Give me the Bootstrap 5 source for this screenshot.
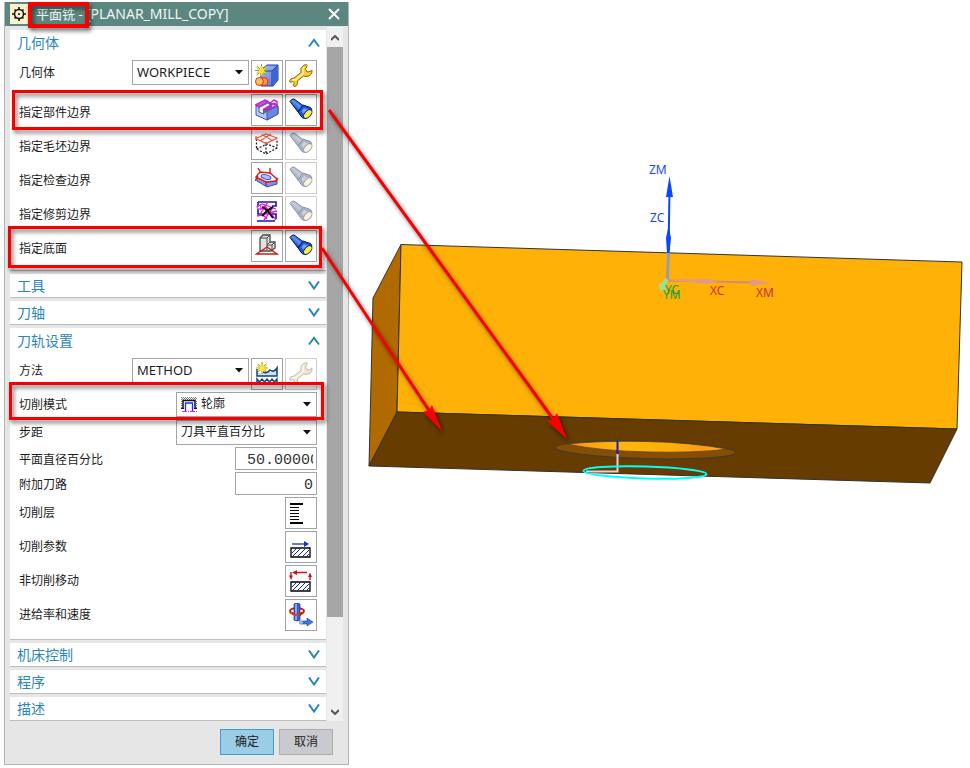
<!DOCTYPE html>
<html lang="zh-CN">
<head>
<meta charset="utf-8">
<meta name="viewport" content="width=device-width, initial-scale=1">
<title>平面铣 - [PLANAR_MILL_COPY]</title>
<link href="https://cdn.jsdelivr.net/npm/bootstrap@5.3.0/dist/css/bootstrap.min.css" rel="stylesheet">
<style>
  body { font-family: "Noto Sans", "Noto Sans CJK SC", sans-serif; font-size: 12px; color: #1c1c1c; background: #fff; }
  .dialog { flex: 0 0 345px; margin: 2px 0 0 4px; background: #e6e6e6; border: 1px solid #b4b4b4; border-top: 0; }
  .titlebar { height: 24px; background: #5b8780; color: #eef6f4; font-size: 13px; line-height: 24px; padding: 0 8px 0 5px; }
  .titlebar svg { display: block; }
  .title-text { padding-left: 8px; font-weight: 400; font-size: 13px; line-height: 24px; }
  .title-op { font-size: 14px; }
  .panes { padding: 4px 0 0 5px; }
  .pane-list { row-gap: 3px; }
  .pane { background: #fff; border-bottom: 1px solid #bdbdbd; }
  .pane-head { height: 26px; line-height: 26px; font-size: 14px; color: #2a86b8; padding: 0 6px 0 7px; background: none; border: 0; }
  .pane-shut .pane-head { height: 23px; }
  .pane-body { padding: 4px 9px 6px 9px; }
  .line { height: 34px; column-gap: 2px; }
  .line > label, .line > .cap { line-height: 25px; }
  .line-btn > .cap { line-height: 32px; }
  .geom .line-btn > .cap { padding-top: 3px; }
  .line-mode { height: 28px; }
  .line-step { height: 27px; }
  .line-num { height: 25px; }
  .pick { height: 25px; border: 1px solid #a6a6a6; background: #fff; }
  .pick .form-select { font-size: 12px; line-height: 20px; height: 23px; min-height: 0; padding: 0 18px 1px 4px; border: 0; border-radius: 0; color: #1c1c1c;
    background-image: url("data:image/svg+xml,%3csvg xmlns='http://www.w3.org/2000/svg' viewBox='0 0 8 5'%3e%3cpath d='M0 0h8L4 4.5z' fill='%23111'/%3e%3c/svg%3e");
    background-size: 8px 5px; background-position: right 5px center; }
  .pick-sm { width: 117px; }
  .pick-sm .form-select { font-size: 13px; }
  .pick-lg { width: 141px; }
  .numbox { width: 82px; height: 23px; border: 1px solid #a6a6a6; border-radius: 0; padding: 3px 3px 0 11px; font: 15px "Liberation Mono", monospace; color: #333; }
  .tool { width: 32px; height: 32px; border: 1px solid #a3a3a3; background: #fff; padding: 0; display: flex; align-items: center; justify-content: center; }
  .tool:disabled { border-color: #cfcfcf; }
  .tool:disabled svg { opacity: .45; filter: grayscale(.65); }
  .scroller { width: 16px; background: #f0f0f0; margin: -3px 5px 0 1px; }
  .scroller button { height: 20px; border: 0; background: none; padding: 0; line-height: 1; }
  .thumb { flex: 570 0 0; background: #a6a6a6; }
  .groove { flex: 84 0 0; }
  .actions { padding: 8px 15px 9px 0; gap: 5px; }
  .act { width: 54px; height: 26px; font-size: 12px; line-height: 18px; padding: 2px; border-radius: 0; border: 1px solid #adadad; background: #c9cacf; color: #1c1c1c; }
  .act-ok { background: #9bcde6; border-color: #3c9fd0; }
  .scene { flex: 1 1 0; min-width: 0; height: 766px; font-size: 12px; }
  .notes { left: 0; top: 0; pointer-events: none; filter: drop-shadow(2px 3px 2px rgba(0,0,0,.55)); }
</style>
</head>
<body>
<svg width="0" height="0" class="position-absolute" aria-hidden="true">
  <defs>
    <linearGradient id="tb" gradientUnits="userSpaceOnUse" x1="5" y1="12" x2="12" y2="4"><stop offset="0" stop-color="#0a2a9c"/><stop offset=".6" stop-color="#5d97f5"/><stop offset="1" stop-color="#0f3cc0"/></linearGradient>
    <linearGradient id="cube" x1="0" y1="0" x2="1" y2="1"><stop offset="0" stop-color="#a9c4fb"/><stop offset="1" stop-color="#4c72da"/></linearGradient>
    <linearGradient id="hole" x1="0" x2="1"><stop offset="0" stop-color="#ff8f0a"/><stop offset=".3" stop-color="#ffb610"/><stop offset=".65" stop-color="#ffae08"/><stop offset=".85" stop-color="#ff9a18"/><stop offset="1" stop-color="#ffb020"/></linearGradient>
    <symbol id="torch" viewBox="0 0 24 24">
      <path d="M1 3.500Q2 1 5 1L14 7.500 9 14z" fill="url(#tb)" stroke="#04145e"/>
      <path d="M14 7 21.500 9.500 23 12 15.500 20.500 13 19.500 9 14z" fill="#1d55d8" stroke="#04145e"/>
      <path d="M12.500 13 15 10 19 11.500 14.500 16z" fill="#6da4fa"/>
      <ellipse cx="18.800" cy="16" rx="3" ry="5.300" transform="rotate(42 18.800 16)" fill="#ffee3c" stroke="#0b2a80"/>
    </symbol>
    <symbol id="wrench" viewBox="0 0 24 24">
      <path d="M15 1Q19 0 18 2L16.500 5 18 8 21 7.500 23 6Q24 10 20 12 17 13 14.500 12L8.500 17Q9 20 7 22L5 22.500 4 21 5.500 19 4 17.500 1.500 18.500.500 17Q1 14 5 14L12 8.500Q10.500 4 15 1z" fill="#f8cb2f" stroke="#8c6a0a"/>
      <path d="M15 3Q12.500 6 14.500 9L7 15.500 3.500 16" fill="none" stroke="#fff3ae" stroke-width="1.500"/>
    </symbol>
    <symbol id="star" viewBox="0 0 14 14">
      <path d="M7 0V14M0 7H14M2 2 12 12M12 2 2 12" stroke="#7c9c20"/><path d="M7 1 8.500 5 12.500 4 9.500 7 12.500 10 8.500 9.500 7 13 5.500 9.500 1.500 10 4.500 7 1.500 4 5.500 5z" fill="#ffe93a" stroke="#d6a900" stroke-width=".5"/>
    </symbol>
    <symbol id="down" viewBox="0 0 12 10"><path d="M1 .500 6 7.500 11 .500" fill="none" stroke="#2a86b8" stroke-width="2"/></symbol>
    <symbol id="up" viewBox="0 0 12 10"><path d="M1 8.500 6 2 11 8.500" fill="none" stroke="#2a86b8" stroke-width="2"/></symbol>
  </defs>
</svg>

<main class="position-relative d-flex align-items-start overflow-hidden">
  <section class="dialog" aria-label="平面铣">
    <header class="titlebar d-flex align-items-center">
      <svg width="18" height="20" viewBox="0 0 18 20"><path d="M0 0H18V20H0z" fill="#fdf1c9"/><circle cx="9" cy="10" r="4.500" fill="none" stroke="#111" stroke-width="1.500"/><path d="M9 3V5.500M9 14.500V17M2 10H4.500M13.500 10H16M4.500 5.500 6 7M13.500 5.500 12 7M4.500 14.500 6 13M13.500 14.500 12 13" stroke="#111" stroke-width="1.600"/><circle cx="9" cy="10" r="1" fill="#111"/></svg>
      <h1 class="title-text m-0 flex-grow-1">平面铣 - <span class="title-op">[PLANAR_MILL_COPY]</span></h1>
      <button class="border-0 bg-transparent p-0" type="button" aria-label="关闭"><svg width="12" height="12"><path d="M1 1 11 11M11 1 1 11" stroke="#fff" stroke-width="2"/></svg></button>
    </header>

    <div class="panes d-flex">
      <div class="pane-list flex-grow-1 d-grid">
        <section class="pane geom">
          <button class="pane-head w-100 d-flex justify-content-between align-items-center" type="button">几何体<svg width="12" height="10"><use href="#up"/></svg></button>
          <div class="pane-body">
            <div class="line d-flex align-items-start">
              <label class="flex-grow-1" for="geo">几何体</label>
              <div class="pick pick-sm"><select class="form-select" id="geo"><option>WORKPIECE</option></select></div>
              <button class="tool" type="button" aria-label="新建几何体"><svg width="24" height="24"><path d="M6 6 12 1H23V16L18 22H6z" fill="url(#cube)" stroke="#1d3cae"/><path d="M6 7H17V22M17 7 23 1" fill="none" stroke="#1d3cae"/><path d="M17.500 7 22.500 2V16L17.500 21z" fill="#3f63d2"/><use href="#star" x="0" y="0" width="13" height="13"/><circle cx="9" cy="17.500" r="4" fill="#ff9a40" stroke="#e02a10"/><circle cx="4.500" cy="17.500" r="4" fill="#ffc05c" stroke="#e02a10"/></svg></button>
              <button class="tool" type="button" aria-label="编辑几何体"><svg width="24" height="24"><use href="#wrench"/></svg></button>
            </div>
            <div class="line line-btn d-flex align-items-start">
              <span class="cap flex-grow-1">指定部件边界</span>
              <button class="tool" type="button" aria-label="选择部件边界"><svg width="24" height="24"><path d="M1 8 11 3 23 8V16L12 22 1 17z" fill="#b4c8f8" stroke="#4054a8"/><path d="M12 13 23 8V16L12 22z" fill="#6888e0" stroke="#4054a8"/><path d="M4 9.500V14L8.500 16V11.500L17 7.500 13 5z" fill="#f4f7ff" stroke="#4054a8"/><path d="M8.500 11.500 17 7.500V11L8.500 16z" fill="#56699f"/><path d="M0 7 10 2 13 3.500 4 8.500V10M4 8.500 1 7M9 11 19 5 22 7 13 12zM15 8V5L19 2 22 3.500V7" fill="none" stroke="#d313cf" stroke-width="1.400"/></svg></button>
              <button class="tool" type="button" aria-label="显示部件边界"><svg width="24" height="24"><use href="#torch"/></svg></button>
            </div>
            <div class="line line-btn d-flex align-items-start">
              <span class="cap flex-grow-1">指定毛坯边界</span>
              <button class="tool" type="button" aria-label="选择毛坯边界"><svg width="24" height="24" fill="none"><path d="M1.500 7V17L11 22 22 16V7M11 12V22M1.500 17 12 12 22 16" stroke="#222" stroke-width="1.300" stroke-dasharray="2 1.500"/><path d="M1 6.500 11 2 22 6 11 11.500zM7 2.500 18 9M16 2 5 9M1 4V8M11 10V13" stroke="#ef5b42" stroke-width="1.300"/></svg></button>
              <button class="tool" type="button" disabled aria-label="显示毛坯边界"><svg width="24" height="24"><use href="#torch"/></svg></button>
            </div>
            <div class="line line-btn d-flex align-items-start">
              <span class="cap flex-grow-1">指定检查边界</span>
              <button class="tool" type="button" aria-label="选择检查边界"><svg width="24" height="24"><path d="M1 11 12 16 22 14V18L12 21 2 15z" fill="#7b98e6" stroke="#3a51b5"/><path d="M1 11 5 6 15 7 22 13 21 15 11 16z" fill="#f6f9ff" stroke="#e01b1b" stroke-width="1.400"/><ellipse cx="11" cy="11" rx="5" ry="2.200" transform="rotate(15 11 11)" fill="#aabfff" stroke="#3145c9"/><path d="M3 2 6 7M15 2V8M0 15 3 10M11 15V20M20 16 23 12" stroke="#e01b1b" stroke-width="1.400"/></svg></button>
              <button class="tool" type="button" disabled aria-label="显示检查边界"><svg width="24" height="24"><use href="#torch"/></svg></button>
            </div>
            <div class="line line-btn d-flex align-items-start">
              <span class="cap flex-grow-1">指定修剪边界</span>
              <button class="tool" type="button" aria-label="选择修剪边界"><svg width="24" height="24" fill="none"><path d="M3 2H21V6H17M3 2V6M3 9V14H7M17 14H21V19M2 21H20" stroke="#1414c0" stroke-width="1.600"/><path d="M2 7 7 4 21 9M5 10 10 6 21 20M13 2 6 13 12 19M17 9 9 20M2 16 22 11" stroke="#e01bd8" stroke-width="1.300"/><circle cx="4" cy="7" r="2" stroke="#e01bd8"/><path d="M7 7Q12 9 18 18M18 7Q12 10 7 16" stroke="#111" stroke-width="2"/></svg></button>
              <button class="tool" type="button" disabled aria-label="显示修剪边界"><svg width="24" height="24"><use href="#torch"/></svg></button>
            </div>
            <div class="line line-btn d-flex align-items-start">
              <span class="cap flex-grow-1">指定底面</span>
              <button class="tool" type="button" aria-label="选择底面"><svg width="24" height="24"><path d="M5 4 8 1H15V8L20 8V14L16 17H5z" fill="#e2e2e2" stroke="#4b4b4b" stroke-width="1.300"/><path d="M5 4H12V16M12 4 15 1M12 11H17V17M17 11 20 8M12 11 15 8" fill="none" stroke="#4b4b4b"/><path d="M1.500 20H22L12 13z" fill="none" stroke="#d01818" stroke-width="1.300"/></svg></button>
              <button class="tool" type="button" aria-label="显示底面"><svg width="24" height="24"><use href="#torch"/></svg></button>
            </div>
          </div>
        </section>

        <section class="pane pane-shut"><button class="pane-head w-100 d-flex justify-content-between align-items-center" type="button">工具<svg width="12" height="10"><use href="#down"/></svg></button></section>
        <section class="pane pane-shut"><button class="pane-head w-100 d-flex justify-content-between align-items-center" type="button">刀轴<svg width="12" height="10"><use href="#down"/></svg></button></section>

        <section class="pane">
          <button class="pane-head w-100 d-flex justify-content-between align-items-center" type="button">刀轨设置<svg width="12" height="10"><use href="#up"/></svg></button>
          <div class="pane-body">
            <div class="line d-flex align-items-start">
              <label class="flex-grow-1" for="method">方法</label>
              <div class="pick pick-sm"><select class="form-select" id="method"><option>METHOD</option></select></div>
              <button class="tool" type="button" aria-label="新建方法"><svg width="24" height="24"><path d="M2 8Q4 12 8 11T14 10 20 9L22 7V14H2z" fill="#c3e4f7"/><path d="M2 7V14H22V6Q19 11 15 8 12 12 8 10" fill="none" stroke="#173f78" stroke-width="1.500"/><path d="M2 22V17L4.500 20 7 17 9.500 20 12 17 14.500 20 17 17 19.500 20 22 17V22" fill="none" stroke="#173f78" stroke-width="1.400"/><use href="#star" x="1" y="0" width="12" height="12"/></svg></button>
              <button class="tool" type="button" disabled aria-label="编辑方法"><svg width="24" height="24"><use href="#wrench"/></svg></button>
            </div>
            <div class="line line-mode d-flex align-items-start">
              <label class="flex-grow-1" for="mode">切削模式</label>
              <div class="pick pick-lg d-flex align-items-center"><svg class="ms-1 flex-shrink-0" width="16" height="16"><path d="M0 .500H16M0 2.500H16M.500 4V11M15.500 4V11" stroke="#777" stroke-dasharray="1 1"/><path d="M1 1.500H16" stroke="#777" stroke-dasharray="1 1"/><path d="M2 11.500V3.500H14V11.500" fill="none" stroke="#111" stroke-width="1.500"/><path d="M0 11.500H3M13 11.500H16" stroke="#111"/><path d="M4.500 14V6H11.500V14" fill="none" stroke="#1530ff" stroke-width="1.300"/><path d="M1 14.500H16" stroke="#f01be8" stroke-dasharray="5 1 1 1"/></svg><select class="form-select" id="mode"><option>轮廓</option></select></div>
            </div>
            <div class="line line-step d-flex align-items-start">
              <label class="flex-grow-1" for="step">步距</label>
              <div class="pick pick-lg"><select class="form-select" id="step"><option>刀具平直百分比</option></select></div>
            </div>
            <div class="line line-num d-flex align-items-start">
              <label class="flex-grow-1" for="pct">平面直径百分比</label>
              <input class="numbox" id="pct" type="text" value="50.00000">
            </div>
            <div class="line line-num d-flex align-items-start">
              <label class="flex-grow-1" for="extra">附加刀路</label>
              <input class="numbox text-end" id="extra" type="text" value="0">
            </div>
            <div class="line line-btn d-flex align-items-start">
              <span class="cap flex-grow-1">切削层</span>
              <button class="tool" type="button" aria-label="切削层"><svg width="24" height="24"><path d="M1 3H14M1 22H14" stroke="#000" stroke-width="2"/><path d="M1 6.500H10M1 9.500H10M1 12.500H10M1 15.500H10M1 18.500H10" stroke="#000"/></svg></button>
            </div>
            <div class="line line-btn d-flex align-items-start">
              <span class="cap flex-grow-1">切削参数</span>
              <button class="tool" type="button" aria-label="切削参数"><svg width="24" height="24"><path d="M3 9H15" stroke="#1730c8" stroke-width="1.300"/><path d="M15 6 20 9 15 12z" fill="#1730c8"/><path d="M2 13H21V22H2z" fill="#fff" stroke="#000" stroke-width="1.300"/><path d="M3 18 7 14M4 21 11 14M9 21 16 14M14 21 20 15M18 21 20 19" stroke="#1a2a9a"/></svg></button>
            </div>
            <div class="line line-btn d-flex align-items-start">
              <span class="cap flex-grow-1">非切削移动</span>
              <button class="tool" type="button" aria-label="非切削移动"><svg width="24" height="24"><path d="M18 3.500H7M2 3V8M21 11V6" stroke="#c81616" stroke-width="1.400"/><path d="M8 1V6L3 3.500zM0 6.500H4L2 11zM19 8H23L21 3.500z" fill="#c81616"/><path d="M2 13H21V22H2z" fill="#fff" stroke="#000" stroke-width="1.300"/><path d="M3 18 7 14M4 21 11 14M9 21 16 14M14 21 20 15M18 21 20 19" stroke="#1a2a9a"/></svg></button>
            </div>
            <div class="line line-btn d-flex align-items-start">
              <span class="cap flex-grow-1">进给率和速度</span>
              <button class="tool" type="button" aria-label="进给率和速度"><svg width="24" height="24"><ellipse cx="8" cy="8" rx="7" ry="3" fill="none" stroke="#c4260e" stroke-width="2"/><path d="M5 1Q8-1 11 1V17Q8 19 5 17z" fill="#3a62cf" stroke="#1b358e" stroke-width=".7"/><path d="M7 1V17" stroke="#9dbcff" stroke-width="1.500"/><path d="M1 9Q4 13 11 11" fill="none" stroke="#e2391a" stroke-width="2"/><path d="M10 9 15 10 11 13.500z" fill="#c4260e"/><path d="M11 18H18V15L24 19 18 23V21H11z" fill="#3c78dd" stroke="#1b419a" stroke-width=".6"/><circle cx="12" cy="19.500" r="2" fill="#86b1f5"/></svg></button>
            </div>
          </div>
        </section>

        <section class="pane pane-shut"><button class="pane-head w-100 d-flex justify-content-between align-items-center" type="button">机床控制<svg width="12" height="10"><use href="#down"/></svg></button></section>
        <section class="pane pane-shut"><button class="pane-head w-100 d-flex justify-content-between align-items-center" type="button">程序<svg width="12" height="10"><use href="#down"/></svg></button></section>
        <section class="pane pane-shut"><button class="pane-head w-100 d-flex justify-content-between align-items-center" type="button">描述<svg width="12" height="10"><use href="#down"/></svg></button></section>
      </div>

      <div class="scroller d-flex flex-column">
        <button type="button" aria-label="向上滚动"><svg width="8" height="6"><path d="M0 5 4 1 8 5" fill="none" stroke="#555" stroke-width="2"/></svg></button>
        <div class="thumb"></div>
        <div class="groove"></div>
        <button type="button" aria-label="向下滚动"><svg width="8" height="6"><path d="M0 1 4 5 8 1" fill="none" stroke="#555" stroke-width="2"/></svg></button>
      </div>
    </div>

    <footer class="actions d-flex justify-content-end">
      <button class="btn act act-ok" type="button">确定</button>
      <button class="btn act" type="button">取消</button>
    </footer>
  </section>

  <svg class="scene" role="img" aria-label="工件模型">
    <g transform="translate(-349 0)">
      <g stroke="#33332f" stroke-width="1" stroke-linejoin="round">
        <path d="M401 244.500 373 298 369 466 397 412z" fill="#b06a00"/>
        <path d="M401 244.500 962 262 957 429 397 412z" fill="#ffb108"/>
        <path d="M397 412 957 429 930 483 369 466z" fill="#663c00"/>
      </g>
      <ellipse cx="645.500" cy="450" rx="90" ry="8.500" transform="rotate(1.600 645.500 450)" fill="#854e00" stroke="#3c3a3a"/>
      <path d="M567 444Q600 440.500 646 441.500T727 449Q700 453 650 452T567 444z" fill="url(#hole)" stroke="#4a3a22" stroke-width=".7"/>
      <path d="M617.500 454V471.500H586" fill="none" stroke="#ecd0d0" stroke-width="2"/>
      <path d="M617.500 441V454" stroke="#1b14d8" stroke-width="2"/>
      <ellipse cx="645" cy="472.500" rx="61.500" ry="6" transform="rotate(1.500 645 472.500)" fill="none" stroke="#0ff" stroke-width="2"/>
      <path d="M667.500 280 668.500 252" stroke="#9d9aa8" stroke-width="3"/>
      <path d="M668.500 253 669.500 190" stroke="#0a46ff" stroke-width="2"/>
      <path d="M669.500 176 673 197H666zM668.500 226 671 238 669.500 253H667L666 238z" fill="#0a46ff"/>
      <path d="M667 280.500 755 282.500" stroke="#d98a70" stroke-width="2"/>
      <path d="M668 280 708 279 718 281.500 708 284zM751 279 772 283 750 286z" fill="#e39a80"/>
      <path d="M667 279 662 286" stroke="#9fe08c" stroke-width="4"/><circle cx="663" cy="287" r="4" fill="#9fe08c"/>
      <g fill="#1746ff"><text x="649" y="174">ZM</text><text x="650" y="222">ZC</text></g>
      <g fill="#c8321e"><text x="710" y="295">XC</text><text x="756" y="297">XM</text></g>
      <g fill="#12a035"><text x="665" y="294">YC</text><text x="663" y="299">YM</text></g>
    </g>
  </svg>

  <svg class="notes position-absolute" width="970" height="768" aria-hidden="true">
    <g fill="none" stroke="#f90000">
      <path d="M30 4H87V26H30z" stroke-width="4"/>
      <path d="M13.500 91.500H321.500V128.500H13.500zM9.500 227.500H320.500V266.500H9.500zM10.500 383.500H322.500V418.500H10.500z" stroke-width="3"/>
      <path d="M329 110 556 423M322 248 432 415" stroke-width="3"/>
    </g>
    <path d="M567 439 547 421 553 419 557 413zM442 431 423 412 429 410 432 405z" fill="#f90000"/>
  </svg>
</main>
<script src="https://cdn.jsdelivr.net/npm/bootstrap@5.3.0/dist/js/bootstrap.bundle.min.js"></script>
</body>
</html>
